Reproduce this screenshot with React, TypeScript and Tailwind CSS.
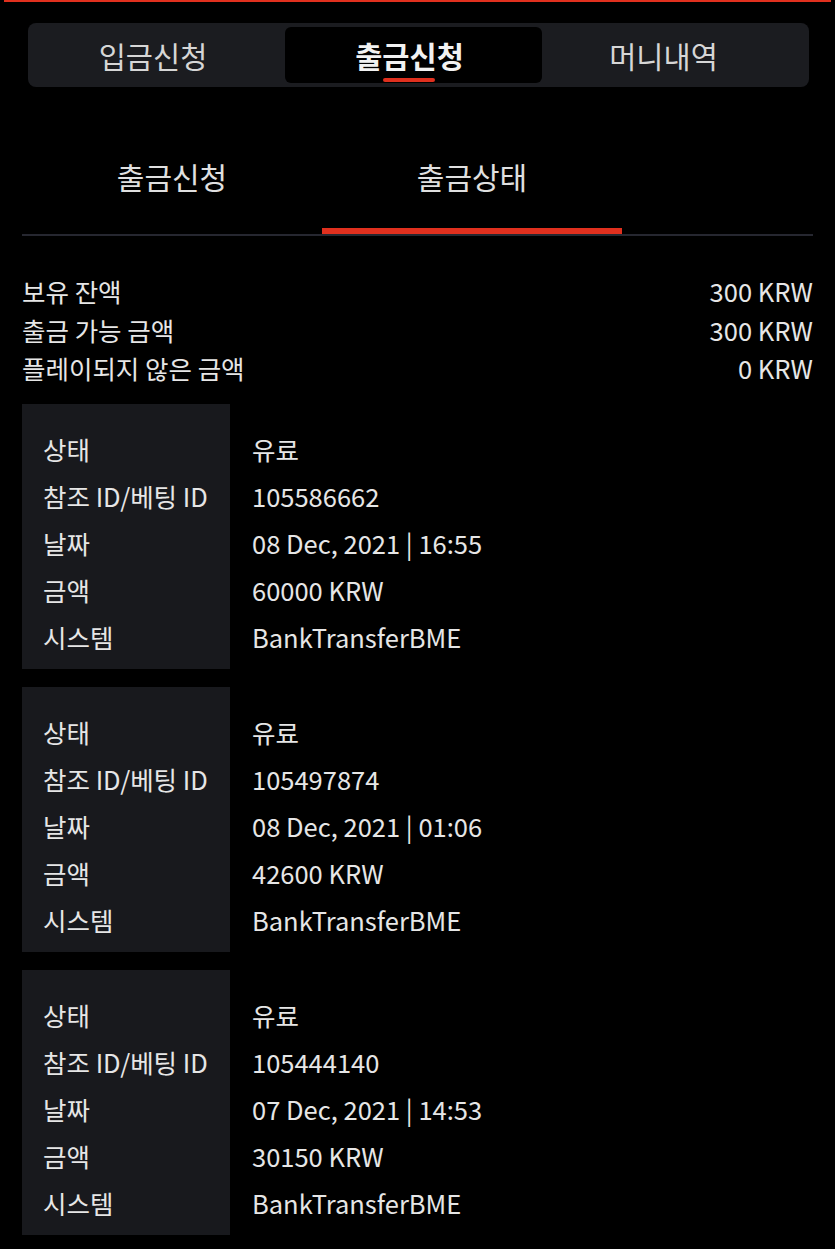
import React from "react";

const FONT = { fontFamily: '"Noto Sans CJK KR", "Noto Sans", sans-serif' };

type Rec = { id: string; date: string; amount: string };

const records: Rec[] = [
  { id: "105586662", date: "08 Dec, 2021 | 16:55", amount: "60000 KRW" },
  { id: "105497874", date: "08 Dec, 2021 | 01:06", amount: "42600 KRW" },
  { id: "105444140", date: "07 Dec, 2021 | 14:53", amount: "30150 KRW" },
];

function Card({ r }: { r: Rec }) {
  const rows: [string, string][] = [
    ["상태", "유료"],
    ["참조 ID/베팅 ID", r.id],
    ["날짜", r.date],
    ["금액", r.amount],
    ["시스템", "BankTransferBME"],
  ];
  return (
    <div className="flex">
      <div className="w-[208px] bg-[#18191d] pt-[21px] pb-[9px]">
        {rows.map(([k]) => (
          <div key={k} className="h-[47px] leading-[47px] pl-[21px] text-[25.5px] text-[#e6e6e6] whitespace-nowrap">
            {k}
          </div>
        ))}
      </div>
      <div className="flex-1 pt-[21px] pb-[9px] pl-[22px]">
        {rows.map(([k, v]) => (
          <div key={k} className="h-[47px] leading-[47px] text-[25.5px] text-[#e6e6e6] whitespace-nowrap">
            {v}
          </div>
        ))}
      </div>
    </div>
  );
}

export default function App() {
  return (
    <div className="w-[835px] min-h-[1249px] bg-black" style={FONT}>
      <div className="mx-[4px] h-[2px] bg-[#e0301e]" />
      <div className="mt-[21px] ml-[28px] mr-[26px] h-[64px] rounded-[8px] bg-[#1b1c20] py-[4px] flex">
        <div className="w-[257px] pr-[7px] flex items-center justify-center text-[29.5px] text-[#d6d6d6]">입금신청</div>
        <div className="relative w-[257px] pr-[8px] flex items-center justify-center rounded-[6px] bg-black text-[29.5px] font-bold text-[#f2f2f2]">
          출금신청
          <div className="absolute bottom-[1px] left-[98px] w-[52px] h-[4px] rounded-full bg-[#e0301e]" />
        </div>
        <div className="w-[257px] pr-[14px] flex items-center justify-center text-[29.5px] text-[#d6d6d6]">머니내역</div>
      </div>

      <div className="mx-[22px] mt-[70px] flex border-b-2 border-[#262730]">
        <div className="w-[300px] text-center text-[30px] leading-[38px] text-[#e0e0e0] pb-[39px]">출금신청</div>
        <div className="relative w-[300px] text-center text-[30px] leading-[38px] text-[#e0e0e0] pb-[39px]">
          출금상태
          <div className="absolute left-0 right-0 bottom-0 h-[6px] bg-[#e0301e]" />
        </div>
      </div>

      <div className="mx-[22px] mt-[36px] text-[25.5px] leading-[38.5px] text-[#e6e6e6]">
        <div className="flex justify-between"><span>보유 잔액</span><span>300 KRW</span></div>
        <div className="flex justify-between"><span>출금 가능 금액</span><span>300 KRW</span></div>
        <div className="flex justify-between"><span>플레이되지 않은 금액</span><span>0 KRW</span></div>
      </div>

      <div className="mx-[22px] mt-[16px] flex flex-col gap-[18px] pb-[15px]">
        {records.map((r) => (
          <Card key={r.id} r={r} />
        ))}
      </div>
    </div>
  );
}
